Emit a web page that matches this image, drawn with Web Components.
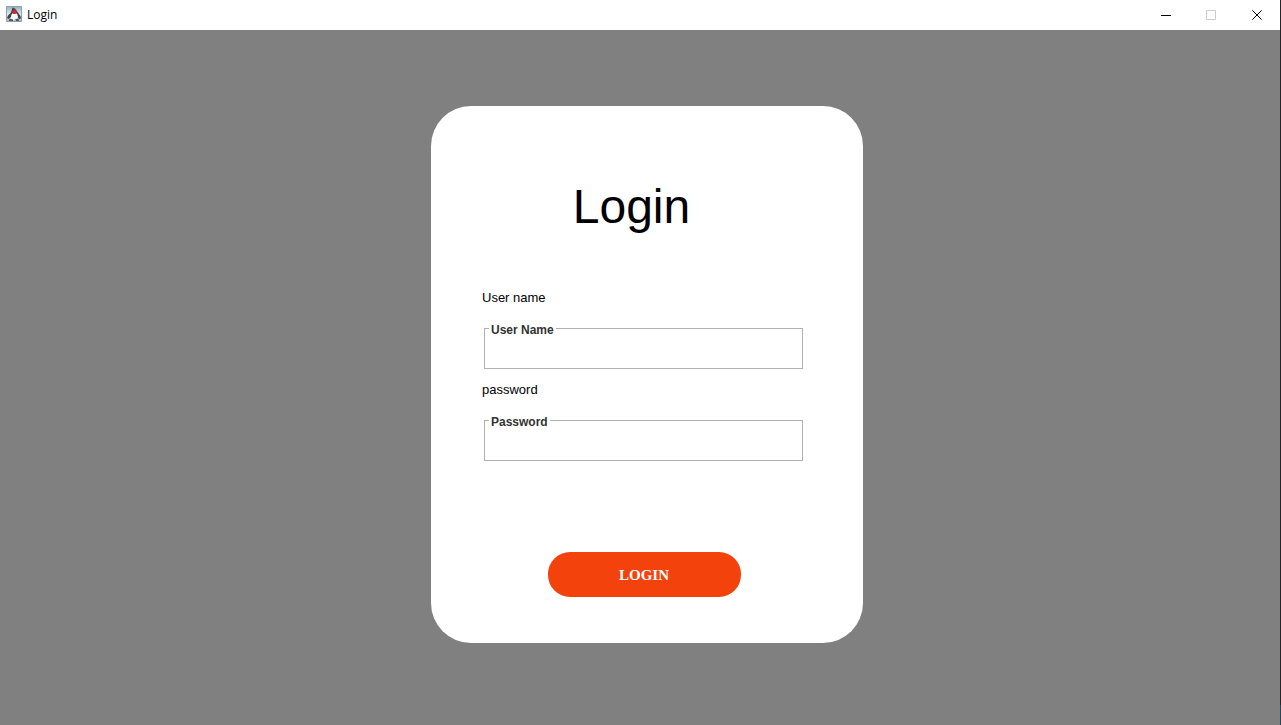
<!DOCTYPE html>
<html lang="en">
<head>
<meta charset="utf-8">
<title>Login</title>
<style>
html, body { height: 100%; margin: 0; }
body { font-family: "Liberation Sans", Arial, sans-serif; color: #000; }
</style>
</head>
<body>
<app-window heading="Login">
  <login-card>
    <text-field slot="fields" label="User name" caption="User Name" type="text"></text-field>
    <text-field slot="fields" label="password" caption="Password" type="password"></text-field>
    <pill-button slot="action">LOGIN</pill-button>
  </login-card>
</app-window>

<template id="title-bar">
<style>
:host { display: flex; align-items: center; height: 30px; background: #fff; font: 12px/16px "Open Sans", "Noto Sans", sans-serif; }
.icon { width: 16px; height: 16px; margin: 0 5px 2px 6px; }
.name { flex: 1; }
button { width: 46px; height: 30px; padding: 0 0 2px; border: 0; background: none; display: grid; place-items: center; color: #000; }
button:disabled { color: #ccc; }
button svg { width: 11px; height: 11px; display: block; fill: none; stroke: currentColor; }
</style>
<svg class="icon" viewBox="0 0 16 16" aria-hidden="true">
  <defs><linearGradient id="sky" x2="0" y2="1"><stop stop-color="#8fb0c2"/><stop offset=".55" stop-color="#e6f0f6"/><stop offset="1" stop-color="#9fb6c6"/></linearGradient></defs>
  <path fill="url(#sky)" stroke="#8ca2b2" d="M.5.5h15v15H.5z"/>
  <path fill="#444" d="M6.5 1.5L9 2.5l3 4 2.5 3.5.5 2.500-2 .5-1.500-2-1-3H6L5 11l-2.500 2L1 12l1-2.500 3-3z"/>
  <path fill="#f8f8f8" d="M6 7.500h5l1 3.500-1 3-2-1-2 1.500L4.500 13z"/>
  <path fill="#555" d="M3.500 12.500l3.500 1v1.500H3zM9.500 13l3-.5.5 2.500h-3z"/>
  <ellipse cx="8.700" cy="6" rx="2.300" ry="2" fill="#d92727"/>
</svg>
<span class="name"></span>
<button type="button" aria-label="Minimize"><svg viewBox="0 0 11 11"><path d="M1 6.500h10"/></svg></button>
<button type="button" aria-label="Maximize" disabled><svg viewBox="0 0 11 11"><path d="M.5 1.500h9v9h-9z"/></svg></button>
<button type="button" aria-label="Close"><svg viewBox="0 0 11 11"><path d="M.3 1.300l9.400 9.400M9.700 1.300L.3 10.700"/></svg></button>
</template>

<template id="app-window">
<style>
:host { display: grid; grid-template-columns: 1fr 1px; min-height: 100%; }
.frame { display: flex; flex-direction: column; background: #808080; }
.edge { background: linear-gradient(to top, #1b4a60 20px, #232527 20px); }
main { flex: 1; display: flex; justify-content: center; align-items: center; padding: 0 0 6px 14px; }
</style>
<div class="frame"><title-bar></title-bar><main><slot></slot></main></div>
<div class="edge"></div>
</template>

<template id="login-card">
<style>
:host { display: block; box-sizing: border-box; width: 432px; max-width: 100%; padding: 73px 60px 46px 51px; background: #fff; border-radius: 40px; }
h1 { margin: 0 0 55px; padding-right: 22px; font-size: 48px; line-height: 56px; font-weight: 400; text-align: center; }
.fields { display: grid; gap: 13px; }
.action { display: flex; justify-content: center; margin-top: 91px; padding-left: 3px; }
</style>
<form>
<h1>Login</h1>
<div class="fields"><slot name="fields"></slot></div>
<div class="action"><slot name="action"></slot></div>
</form>
</template>

<template id="text-field">
<style>
:host { display: block; }
.label { display: block; font-size: 13px; line-height: 16px; margin-bottom: 22px; }
.box { position: relative; margin: 0 0 0 2px; }
.caption { position: absolute; left: 5px; top: -6px; padding: 0 2px; background: #fff; color: #333; font-size: 12px; line-height: 16px; font-weight: 700; }
input { display: block; box-sizing: border-box; width: 100%; height: 41px; padding: 8px 6px 0; border: 1px solid #b0b0b0; border-radius: 0; background: #fff; font: inherit; font-size: 13px; outline: none; }
</style>
<label class="label" for="control"></label>
<div class="box"><input id="control"><label class="caption" for="control"></label></div>
</template>

<template id="pill-button">
<style>
:host { display: block; }
button { display: block; width: 193px; height: 45px; padding: 0; border: 0; border-radius: 22px; background: #f3420c; color: #fff; font: 700 15px/20px "Liberation Serif", "Times New Roman", serif; }
</style>
<button type="button"><slot></slot></button>
</template>

<script>
class TemplateElement extends HTMLElement {
  constructor() {
    super();
    const template = document.getElementById(this.localName);
    this.attachShadow({ mode: "open" }).append(template.content.cloneNode(true));
  }
}
class TitleBar extends TemplateElement {
  static observedAttributes = ["heading"];
  attributeChangedCallback(name, old, value) {
    this.shadowRoot.querySelector(".name").textContent = value;
  }
}
class AppWindow extends TemplateElement {
  connectedCallback() {
    this.shadowRoot.querySelector("title-bar").setAttribute("heading", this.getAttribute("heading"));
  }
}
class LoginCard extends TemplateElement {}
class TextField extends TemplateElement {
  connectedCallback() {
    const root = this.shadowRoot;
    root.querySelector(".label").textContent = this.getAttribute("label");
    root.querySelector(".caption").textContent = this.getAttribute("caption");
    root.querySelector("input").type = this.getAttribute("type");
  }
}
class PillButton extends TemplateElement {}
customElements.define("title-bar", TitleBar);
customElements.define("app-window", AppWindow);
customElements.define("login-card", LoginCard);
customElements.define("text-field", TextField);
customElements.define("pill-button", PillButton);
</script>
</body>
</html>
